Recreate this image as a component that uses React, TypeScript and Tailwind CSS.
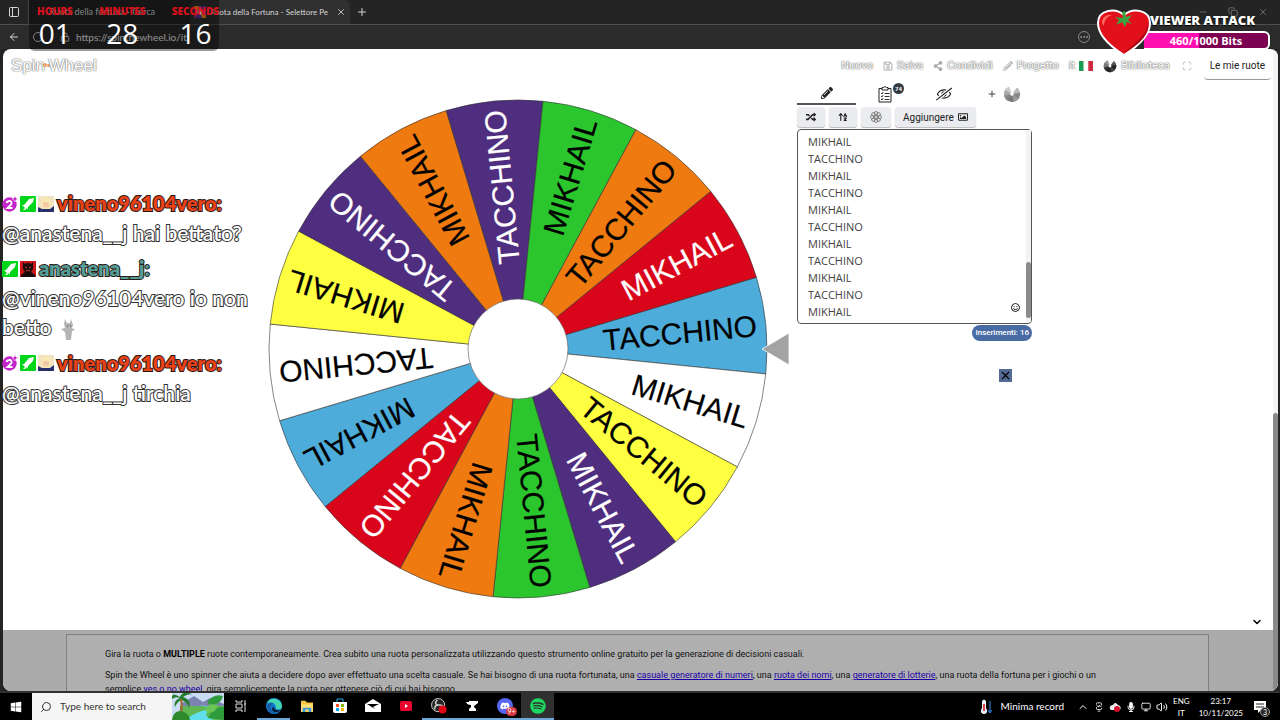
import type { ReactNode } from 'react';
import {
  ArrowLeft,
  BatteryCharging,
  ChevronDown,
  ChevronUp,
  Copy,
  Ellipsis,
  Lock,
  Maximize,
  Minus,
  Monitor,
  PanelTop,
  Plus,
  RotateCw,
  Search,
  Volume2,
  X,
} from 'lucide-react';
import {
  FaDiscord,
  FaMicrophone,
  FaPencilAlt,
  FaRandom,
  FaRegEyeSlash,
  FaRegImage,
  FaRegSave,
  FaRegSmile,
  FaShareAlt,
  FaSpotify,
  FaWindows,
} from 'react-icons/fa';
import { FaArrowUpAZ } from 'react-icons/fa6';

interface Slice {
  label: string;
  fill: string;
  text: string;
}

const PURPLE = '#4f2d7f';
const ORANGE = '#ee7a10';
const GREEN = '#2bc52d';
const BLUE = '#4eacdb';
const YELLOW = '#ffff42';
const RED = '#d9051a';

// Clockwise, starting from the slice under the pointer
const slices: Slice[] = [
  { label: 'TACCHINO', fill: BLUE, text: '#000' },
  { label: 'MIKHAIL', fill: '#fff', text: '#000' },
  { label: 'TACCHINO', fill: YELLOW, text: '#000' },
  { label: 'MIKHAIL', fill: PURPLE, text: '#fff' },
  { label: 'TACCHINO', fill: GREEN, text: '#000' },
  { label: 'MIKHAIL', fill: ORANGE, text: '#000' },
  { label: 'TACCHINO', fill: RED, text: '#fff' },
  { label: 'MIKHAIL', fill: BLUE, text: '#000' },
  { label: 'TACCHINO', fill: '#fff', text: '#000' },
  { label: 'MIKHAIL', fill: YELLOW, text: '#000' },
  { label: 'TACCHINO', fill: PURPLE, text: '#fff' },
  { label: 'MIKHAIL', fill: ORANGE, text: '#000' },
  { label: 'TACCHINO', fill: PURPLE, text: '#fff' },
  { label: 'MIKHAIL', fill: GREEN, text: '#000' },
  { label: 'TACCHINO', fill: ORANGE, text: '#000' },
  { label: 'MIKHAIL', fill: RED, text: '#fff' },
];

const entries = Array.from({ length: 12 }, (_, i) => (i % 2 === 0 ? 'MIKHAIL' : 'TACCHINO')).join('\n');

function Wheel() {
  const radius = 249;
  const step = 360 / slices.length;
  const offset = -5.5;

  const point = (deg: number) => {
    const rad = (deg * Math.PI) / 180;
    return `${(radius * Math.cos(rad)).toFixed(2)} ${(radius * Math.sin(rad)).toFixed(2)}`;
  };

  return (
    <svg viewBox="-250 -250 522 500" className="w-[522px] shrink-0" role="img" aria-label="Ruota">
      {slices.map((slice, i) => {
        const mid = offset + i * step;
        return (
          <g key={i}>
            <path
              d={`M0 0L${point(mid - step / 2)}A${radius} ${radius} 0 0 1 ${point(mid + step / 2)}Z`}
              fill={slice.fill}
              stroke="#333"
              strokeWidth="0.6"
            />
            <text
              transform={`rotate(${mid})`}
              x="240"
              y="10"
              textAnchor="end"
              fontSize="30"
              fontFamily="'Liberation Sans', sans-serif"
              fill={slice.text}
              stroke={slice.text}
              strokeWidth="0.2"
            >
              {slice.label}
            </text>
          </g>
        );
      })}
      <circle r="50" fill="#fff" stroke="#555" strokeWidth="0.6" />
      <path d="M244 0L271 -16V16Z" fill="#a3a3a3" stroke="#fff" strokeWidth="0.8" />
    </svg>
  );
}

function MiniWheel({ className, dark }: { className: string; dark?: boolean }) {
  const shades = dark
    ? ['#555', '#222', '#444', '#222', '#333', '#777', '#999']
    : ['#bbb', '#888', '#999', '#777', '#888', '#aaa', '#ccc'];
  return (
    <svg viewBox="-10 -10 20 20" className={className} aria-hidden="true">
      {shades.map((shade, i) => (
        <path key={i} d="M0 0L8.9 -1.2A9 9 0 0 1 5.6 7Z" fill={shade} transform={`rotate(${i * 44 - 45})`} />
      ))}
      <path d="M0 0L-4 -10H4Z" fill="#fff" />
      <circle r="2" fill="#fff" />
    </svg>
  );
}

function BrowserChrome() {
  return (
    <header className="bg-[#242424] font-[Lato,sans-serif] text-[#d5d5d5]">
      <div className="flex h-6 items-center pl-2">
        <PanelTop className="h-3 w-3 -rotate-90" />
        <div className="ml-2 flex h-full w-[162px] items-center border-l border-[#444] pl-5 text-[9px]">
          <span className="flex-1">Ruota della fortuna - Cerca</span>
        </div>
        <div className="flex h-full w-40 items-center gap-1 rounded-t-md bg-[#303030] pl-1 text-[8px]">
          <svg viewBox="0 0 12 12" className="h-3 w-3 shrink-0" aria-hidden="true">
            <rect width="12" height="12" fill="#5631a5" />
            <path d="M6 6L0 2V0H5ZM6 6L12 9V12H8Z" fill="#f08c1a" />
            <path d="M6 6L12 1V6ZM6 6L0 7V12Z" fill="#e32950" />
            <circle cx="6" cy="6" r="2.6" fill="#fff" />
          </svg>
          <span className="flex-1 whitespace-nowrap">Ruota della Fortuna - Selettore Pe</span>
          <button aria-label="Chiudi scheda" className="pr-1">
            <X className="h-2.5 w-2.5" />
          </button>
        </div>
        <button aria-label="Nuova scheda" className="ml-1.5">
          <Plus className="h-3 w-3" />
        </button>
        <div className="ml-auto flex gap-5 pr-3 text-[#777]">
          <Minus className="h-2.5 w-2.5" />
          <Copy className="h-2.5 w-2.5" />
          <X className="h-2.5 w-2.5" />
        </div>
      </div>
      <div className="flex h-[25px] items-center gap-3 border-t border-[#505050] bg-[#2b2b2b] px-2">
        <button aria-label="Indietro">
          <ArrowLeft className="h-3 w-3" />
        </button>
        <button aria-label="Aggiorna">
          <RotateCw className="h-3 w-3" />
        </button>
        <div className="flex flex-1 items-center gap-1.5 pl-1 text-[10px] text-[#eee]">
          <Lock className="h-2.5 w-2.5" />
          <span className="flex-1">https://spinthewheel.io/it</span>
          <span className="mr-[182px] rounded-full border border-[#888] text-[#aaa]">
            <Ellipsis className="h-2.5 w-2.5" />
          </span>
        </div>
      </div>
    </header>
  );
}

// White letters with a soft grey halo, used by the site header
const haloText =
  'text-white [text-shadow:0_0_1px_#777,0_0_1px_#888,0_0_2px_#999]';

function NavLink({ icon, children }: { icon?: ReactNode; children: ReactNode }) {
  return (
    <a href="#" className="flex items-center gap-1">
      {icon}
      <span className={haloText}>{children}</span>
    </a>
  );
}

function SiteHeader() {
  return (
    <div className="flex h-[34px] items-center justify-between pl-2 font-[Roboto,sans-serif]">
      <a href="#" className={`flex items-center font-['Liberation_Sans',sans-serif] text-[17px] ${haloText}`}>
        Spin
        <span className="-mx-0.5 text-[5px] font-bold text-amber-600 [text-shadow:none]">the</span>
        Wheel
      </a>
      <nav className="flex items-center gap-[10px] text-[11px]">
        <NavLink>Nuovo</NavLink>
        <NavLink icon={<FaRegSave className="h-2.5 w-2.5 text-[#aaa]" />}>Salva</NavLink>
        <NavLink icon={<FaShareAlt className="h-2.5 w-2.5 text-[#aaa]" />}>Condividi</NavLink>
        <NavLink icon={<FaPencilAlt className="h-2.5 w-2.5 text-[#bbb]" />}>Progetto</NavLink>
        <a href="#" className="flex items-center gap-1">
          <span className={haloText}>it</span>
          <svg viewBox="0 0 14 10" className="w-3.5" aria-label="Italiano">
            <path d="M0 0h4.7v10H0z" fill="#1a9b50" />
            <path d="M4.7 0h4.6v10H4.7z" fill="#fff" />
            <path d="M9.3 0H14v10H9.3z" fill="#cd2a3e" />
          </svg>
        </a>
        <NavLink icon={<MiniWheel className="h-3.5 w-3.5" dark />}>Biblioteca</NavLink>
        <button aria-label="Schermo intero" className="px-0.5">
          <Maximize className="h-2.5 w-2.5 text-[#bbb]" />
        </button>
        <button className="mr-0.5 rounded-sm border-b border-[#999] px-1.5 py-1.5 text-[10px] text-[#222]">
          Le mie ruote
        </button>
      </nav>
    </div>
  );
}

const toolButton =
  'flex h-5 items-center justify-center rounded-[3px] bg-[#ebecef] text-[#222] shadow-[0_1px_1px_#bbb]';

function EntriesPanel() {
  return (
    <section className="w-[235px] font-[Roboto,sans-serif]">
      <div className="flex h-[22px] items-stretch text-[#222]">
        <button aria-label="Modifica" className="flex w-[59px] items-center justify-center border-b-2 border-[#555]">
          <FaPencilAlt className="h-3 w-3" />
        </button>
        <button aria-label="Risultati" className="relative flex w-[58px] items-center justify-center">
          <ClipboardIcon />
          <span className="absolute top-0 right-2.5 rounded-full bg-[#333a42] px-[2px] text-[6px] leading-[11px] font-bold text-white">
            74
          </span>
        </button>
        <button aria-label="Nascondi" className="flex w-[59px] items-center justify-center">
          <FaRegEyeSlash className="h-4 w-4 -scale-x-100" />
        </button>
        <button aria-label="Nuova ruota" className="ml-3.5 flex items-center gap-1.5">
          <Plus className="h-2.5 w-2.5" />
          <MiniWheel className="h-[18px] w-[18px]" />
        </button>
      </div>
      <div className="mt-[2px] mb-[2px] flex gap-1">
        <button aria-label="Mescola" className={`w-7 ${toolButton}`}>
          <FaRandom className="h-2.5 w-2.5" />
        </button>
        <button aria-label="Ordina" className={`w-7 ${toolButton}`}>
          <FaArrowUpAZ className="h-2.5 w-2.5" />
        </button>
        <button aria-label="Aspetto" className={`w-[30px] ${toolButton}`}>
          <svg viewBox="-8 -8 16 16" className="h-3 w-3" fill="none" stroke="#666" aria-hidden="true">
            {[0, 45, 90, 135, 180, 225, 270, 315].map((a) => (
              <circle key={a} cx="5" r="2.3" transform={`rotate(${a})`} />
            ))}
            <circle r="2" />
          </svg>
        </button>
        <button className={`gap-1 px-2 text-[10px] ${toolButton}`}>
          Aggiungere <FaRegImage className="h-2.5 w-2.5" />
        </button>
      </div>
      <div className="relative">
        <textarea
          aria-label="Inserimenti"
          defaultValue={entries}
          className="block h-[195px] w-full resize-none overflow-hidden rounded-sm border border-[#555] px-[10px] pt-[3px] font-['Open_Sans',sans-serif] text-[11px] leading-[17px] text-[#444]"
        />
        <div className="absolute top-px right-px h-[192px] w-[5px] bg-[#f3f3f3]">
          <div className="mt-[132px] h-[56px] rounded-full bg-[#8b8b8b]" />
        </div>
        <button aria-label="Emoji" className="absolute right-3 bottom-3">
          <FaRegSmile className="h-[9px] w-[9px]" />
        </button>
      </div>
      <div className="flex justify-end pt-px">
        <span className="rounded-full bg-[#4a6ca4] px-[3px] text-[8px] leading-4 font-medium text-white">
          Inserimenti: 16
        </span>
      </div>
      <div className="flex justify-end pt-7 pr-5">
        <button aria-label="Chiudi" className="bg-[#536a94] text-black">
          <X className="h-[13px] w-[13px]" />
        </button>
      </div>
    </section>
  );
}

function ClipboardIcon() {
  return (
    <svg viewBox="0 0 14 17" className="h-[17px] w-3.5" fill="none" stroke="#222" aria-hidden="true">
      <path d="M4 2.5H1V16H13V2.5H10" />
      <path d="M4 1.5H5.5Q7 -0.5 8.5 1.5H10V4H4Z" />
      <path d="M3 7l1 1 1-2M3 10l1 1 1-2M3 13l1 1 1-2M6.5 7.5h5M6.5 10.5h5M6.5 13.5h5" strokeWidth="0.9" />
    </svg>
  );
}

function Description() {
  const link = 'text-[#1b00a8] underline';
  return (
    <article className="flex-1 overflow-hidden bg-[#ababab] pt-1 pr-16 pl-[63px]">
      <div className="h-full border border-b-0 border-[#808080] bg-[#afafaf] pt-3 pr-20 pl-[38px] font-[Roboto,sans-serif] text-[9px] leading-[14px] text-[#111]">
        <p>
          Gira la ruota o <strong className="text-black">MULTIPLE</strong> ruote contemporaneamente. Crea subito una
          ruota personalizzata utilizzando questo strumento online gratuito per la generazione di decisioni casuali.
        </p>
        <p className="mt-[7px]">
          Spin the Wheel è uno spinner che aiuta a decidere dopo aver effettuato una scelta casuale. Se hai bisogno di
          una ruota fortunata, una <a href="#" className={link}>casuale generatore di numeri</a>, una{' '}
          <a href="#" className={link}>ruota dei nomi</a>, una <a href="#" className={link}>generatore di lotterie</a>,
          una ruota della fortuna per i giochi o un semplice <a href="#" className={link}>yes o no wheel</a>, gira
          semplicemente la ruota per ottenere ciò di cui hai bisogno.
        </p>
      </div>
    </article>
  );
}

function Timer() {
  const units = [
    { label: 'HOURS', value: '01' },
    { label: 'MINUTES', value: '28' },
    { label: 'SECONDS', value: '16' },
  ];
  return (
    <div className="absolute top-0 left-[29px] flex h-[51px] w-[190px] justify-between rounded-b-md bg-black/40 pl-2 font-['Open_Sans',sans-serif]">
      {units.map((unit) => (
        <div key={unit.label} className="flex flex-col items-center pt-1">
          <span className="text-[10px] leading-[14px] font-extrabold text-[#d5121b]">{unit.label}</span>
          <span className="text-[28px] leading-[30px] font-medium text-white">{unit.value}</span>
        </div>
      ))}
    </div>
  );
}

function ViewerAttack() {
  return (
    <div className="absolute top-[9px] right-[10px] flex font-['Open_Sans',sans-serif]">
      <svg viewBox="0 0 56 48" className="relative z-10 w-14" aria-hidden="true">
        <path
          d="M28 46C20 41 2 29 2 14C2 1 19 -2 28 6C37 -2 54 1 54 14C54 29 36 41 28 46Z"
          fill="#e2101b"
          stroke="#fff"
          strokeWidth="2"
        />
        <path d="M6 14C6 8 11 5 16 6C11 8 8 11 8 17Z" fill="#ff6a5f" />
        <path d="M52 14C50 28 37 35 28 44C46 34 54 24 52 14Z" fill="#b00614" />
        <path d="M27 9L26 3L29 2L30 8L36 6L32 11L36 15L31 13L29 18L26 13L20 16L23 11L19 8Z" fill="#3aa33f" />
      </svg>
      <div className="-ml-2">
        <div className="pl-1.5 text-[13px] leading-[22px] font-extrabold text-white [text-shadow:0_1px_1px_#000]">
          VIEWER ATTACK
        </div>
        <div className="h-[19px] w-[126px] rounded-r-md border-2 border-l-0 border-white bg-[linear-gradient(90deg,#ff0fb0_44%,#7c0150_45%)] text-center text-[11px] leading-4 font-bold text-white">
          460/1000 Bits
        </div>
      </div>
    </div>
  );
}

function SwordBadge() {
  return (
    <svg viewBox="0 0 16 16" className="h-4 w-4" aria-hidden="true">
      <rect width="16" height="16" rx="1" fill="#00d619" />
      <path d="M14 2L9 3L4 9L2 9L5 12L3 14L5 14L7 12L8 14L8 11L13 6Z" fill="#fff" />
    </svg>
  );
}

function CheerBadge() {
  return (
    <svg viewBox="0 0 16 16" className="h-4 w-4" aria-hidden="true">
      <circle cx="7.5" cy="8.5" r="7.2" fill="#c425cb" />
      <path d="M13 0L14 2L16 3L14 4L13 6L12 4L10 3L12 2Z" fill="#c425cb" stroke="#fff" strokeWidth="0.5" />
      <path d="M4.5 7Q5 5 7.5 5T9.5 8L5.5 12H10.5" fill="none" stroke="#fff" strokeWidth="1.8" />
    </svg>
  );
}

function PortraitBadge() {
  return (
    <svg viewBox="0 0 16 16" className="h-4 w-4" aria-hidden="true">
      <rect width="16" height="16" fill="#f2e3c0" />
      <path d="M0 11L4 13L12 13L16 10V16H0Z" fill="#27306b" />
      <path d="M3 5Q8 -2 13 5L12 11Q8 15 4 11Z" fill="#fae8b4" />
      <path d="M5 7Q8 5 11 7V10Q8 13 5 10Z" fill="#f3c8a5" />
    </svg>
  );
}

function DemonBadge() {
  return (
    <svg viewBox="0 0 16 16" className="h-4 w-4" aria-hidden="true">
      <rect width="16" height="16" fill="#c8171a" />
      <path d="M3 1L5 3Q8 1 11 3L13 1V8L11 11L15 14V16H1V14L5 11L3 8Z" fill="#1b0a0c" />
      <path d="M5 6L7 7M11 6L9 7M6 10Q8 8 10 10" stroke="#c63a2a" fill="none" />
    </svg>
  );
}

const outlined = '[paint-order:stroke_fill]';

function ChatMessage({ badges, user, color, children }: { badges: ReactNode; user: string; color: string; children: ReactNode }) {
  return (
    <div className="mb-[7px] leading-[29px]">
      <div className="flex items-center gap-[2px] text-[20px]">
        {badges}
        <span className={`pl-px font-extrabold [-webkit-text-stroke:2px_#2b1a16] ${outlined} ${color}`}>{user}:</span>
      </div>
      <p className={`text-[21px] font-semibold text-white [-webkit-text-stroke:2px_#333] ${outlined}`}>{children}</p>
    </div>
  );
}

function Chat() {
  const vinenoBadges = (
    <>
      <CheerBadge />
      <SwordBadge />
      <PortraitBadge />
    </>
  );
  return (
    <div className="absolute top-[189px] left-[2px] w-64 font-[Lato,sans-serif]">
      <ChatMessage badges={vinenoBadges} user="vineno96104vero" color="text-[#e94218]">
        @anastena__j hai bettato?
      </ChatMessage>
      <ChatMessage
        badges={
          <>
            <SwordBadge />
            <DemonBadge />
          </>
        }
        user="anastena__j"
        color="text-[#539f97]"
      >
        @vineno96104vero io non
        <br />
        betto{' '}
        <svg viewBox="0 0 14 24" className="ml-1 inline h-6 w-3.5" aria-hidden="true">
          <path d="M4 1L6 5H9L10 1L12 7L11 10L14 12L11 13L10 22H5L4 14L0 11L4 10L3 6Z" fill="#b5b5b5" />
          <path d="M6 8H7M9 8H10" stroke="#333" />
        </svg>
      </ChatMessage>
      <ChatMessage badges={vinenoBadges} user="vineno96104vero" color="text-[#e94218]">
        @anastena__j tirchia
      </ChatMessage>
    </div>
  );
}

function TaskButton({ label, open, active, children }: { label: string; open?: boolean; active?: boolean; children: ReactNode }) {
  return (
    <button
      aria-label={label}
      className={`flex h-full w-[33px] items-center justify-center border-b-2 ${open ? 'border-[#6fa8d8]' : 'border-transparent'} ${active ? 'bg-[#303030]' : ''}`}
    >
      {children}
    </button>
  );
}

function Taskbar() {
  return (
    <footer className="flex h-[27px] items-center bg-black font-[Lato,sans-serif] text-[10px] text-white">
      <button aria-label="Start" className="flex w-8 justify-center">
        <FaWindows className="h-3 w-3" />
      </button>
      <div className="flex h-full w-[192px] items-center bg-[#f5f5f5] text-[#333]">
        <Search className="mx-2 h-3 w-3 -scale-x-100" />
        <input
          aria-label="Search"
          placeholder="Type here to search"
          className="w-[108px] bg-transparent placeholder:text-[#333]"
        />
        <svg viewBox="0 0 52 27" className="ml-auto h-full w-[52px]" aria-hidden="true">
          <path d="M0 0H52V27H0Z" fill="#c9dcf4" />
          <path d="M10 10L22 3L31 9L38 5L52 11V18H10Z" fill="#7c83b0" />
          <path d="M8 13H52V27H8Z" fill="#5fb655" />
          <path d="M27 12Q42 15 30 18Q18 22 14 27H42Q30 23 36 19Q45 14 27 12Z" fill="#5fe0ec" />
          <path d="M8 4Q-1 -2 0 6Q4 3 8 5Q1 8 3 14Q5 9 9 7Q16 9 17 15Q20 7 11 4Q18 -1 21 3Q15 -4 9 2Z" fill="#257d2b" />
          <path d="M8 6Q10 14 5 27H9Q12 14 10 6Z" fill="#9c6b35" />
          <path d="M35 9Q42 0 51 3Q49 12 38 12ZM36 25Q40 13 52 14V27Z" fill="#2e9b3c" />
          <path d="M33 17Q36 9 46 12Q44 20 36 20Z" fill="#69c655" />
          <path d="M0 27Q1 18 9 18Q17 20 18 27Z" fill="#2f8a2c" />
        </svg>
      </div>
      <TaskButton label="Task view">
        <svg viewBox="0 0 12 12" className="h-3 w-3" fill="none" stroke="#ddd" aria-hidden="true">
          <path d="M1 0V2H7V0M1 12V10H7V12M1 4H7V8H1ZM10 0V12M9 4H11" />
        </svg>
      </TaskButton>
      <TaskButton label="Edge" open>
        <svg viewBox="0 0 16 16" className="h-4 w-4" aria-hidden="true">
          <circle cx="8" cy="8" r="8" fill="#1680d8" />
          <path d="M1 5A8 8 0 0 1 16 8Q16 12 11 11Q9 10 10 8Q8 3 1 5Z" fill="#43d6ad" />
          <path d="M5 9Q5 15 12 15Q7 17 3 13Q-1 8 3 5Q6 4 8 6Q5 6 5 9Z" fill="#145ba8" />
          <path d="M8 8Q7 13 15 12Q12 15 8 14Q4 11 8 8Z" fill="#071d35" />
        </svg>
      </TaskButton>
      <TaskButton label="Esplora file">
        <svg viewBox="0 0 16 14" className="h-3 w-3.5" aria-hidden="true">
          <path d="M1 1H6L8 3H15V14H1Z" fill="#f4c744" />
          <path d="M1 5H15V13H1Z" fill="#ffdf75" />
          <path d="M3 9H13V14H10V11H6V14H3Z" fill="#3899da" />
        </svg>
      </TaskButton>
      <TaskButton label="Store">
        <svg viewBox="0 0 14 16" className="h-4 w-3.5" aria-hidden="true">
          <path d="M4 4V1H10V4" fill="none" stroke="#31a8e0" />
          <path d="M0 4H14V13Q14 15 12 15H2Q0 15 0 13Z" fill="#fff" />
          <path d="M3 6H6V9H3Z" fill="#f25022" />
          <path d="M8 6H11V9H8Z" fill="#7fba00" />
          <path d="M3 10H6V13H3Z" fill="#00a4ef" />
          <path d="M8 10H11V13H8Z" fill="#ffb900" />
        </svg>
      </TaskButton>
      <TaskButton label="Posta">
        <svg viewBox="0 0 16 14" className="h-3.5 w-4" aria-hidden="true">
          <path d="M0 5L8 0L16 5V13H0Z" fill="#fff" />
          <path d="M2 5H14L8 8L10 10Z" fill="#000" />
        </svg>
      </TaskButton>
      <TaskButton label="YouTube">
        <svg viewBox="0 0 12 10" className="h-2.5 w-3" aria-hidden="true">
          <rect width="12" height="10" rx="2" fill="#e9052d" />
          <path d="M5 3L8 5L5 7Z" fill="#fff" />
        </svg>
      </TaskButton>
      <TaskButton label="OBS" open>
        <svg viewBox="0 0 18 18" className="h-4 w-4" aria-hidden="true">
          <circle cx="8" cy="8" r="7.4" fill="#242424" stroke="#ddd" />
          <path d="M7 2Q3 7 8 8Q13 7 14 10M8 8Q4 8 4 13" fill="none" stroke="#ccc" strokeWidth="1.7" />
          <circle cx="13" cy="13" r="4.5" fill="#e10613" />
        </svg>
      </TaskButton>
      <TaskButton label="Streamer" open>
        <svg viewBox="0 0 12 12" className="h-3 w-3" fill="#fff" aria-hidden="true">
          <path d="M0 2H3V1H12V3L8 6V7L10 9V11H3V9L5 7V5Q1 5 0 2Z" />
        </svg>
      </TaskButton>
      <TaskButton label="Discord" open>
        <span className="relative flex h-4 w-4 items-center justify-center rounded-full bg-[#5865f2]">
          <FaDiscord className="h-2.5 w-2.5" />
          <span className="absolute -right-1 -bottom-0.5 rounded-full bg-[#d83842] px-px text-[7px] leading-[9px]">9+</span>
        </span>
      </TaskButton>
      <TaskButton label="Spotify" open active>
        <FaSpotify className="h-4 w-4 text-[#1ed760]" />
      </TaskButton>
      <div className="ml-auto flex items-center gap-[5px] pr-[14px]">
        <svg viewBox="0 0 12 16" className="h-4 w-3" aria-hidden="true">
          <path d="M2 2Q4 -1 6 2V9Q9 14 4 15Q-1 14 2 9Z" fill="#e6f3ff" />
          <path d="M4 5V12" stroke="#e43d46" strokeWidth="2" />
          <path d="M10 2V13M8 11L10 14L12 11" fill="none" stroke="#3588ef" />
        </svg>
        <span className="mr-2 ml-1">Minima record</span>
        <ChevronUp className="h-3 w-3" />
        <BatteryCharging className="h-2.5 w-2.5 rotate-90" />
        <svg viewBox="0 0 12 10" className="h-2.5 w-3" aria-hidden="true">
          <path d="M1 7Q0 3 4 3Q6 -1 9 3Q13 4 11 8H2Z" fill="#eee" />
          <circle cx="8" cy="7" r="3" fill="#d51130" />
        </svg>
        <FaMicrophone className="h-2.5 w-2.5" />
        <Monitor className="h-2.5 w-2.5" />
        <Volume2 className="h-3 w-3" />
        <div className="pr-1 text-center text-[8px] leading-[12px]">
          ENG
          <br />
          IT
        </div>
        <div className="text-center text-[8px] leading-[12px]">
          23:17
          <br />
          10/11/2025
        </div>
        <div className="relative ml-1.5">
          <svg viewBox="0 0 12 12" className="h-3 w-3" aria-hidden="true">
            <path d="M0 0H12V9H7L4 12V9H0Z" fill="#fff" />
            <path d="M2 3H10M2 6H10" stroke="#222" />
          </svg>
          <span className="absolute -right-1 -bottom-1 rounded-full border border-[#999] bg-[#222] px-[2px] text-[7px] leading-[8px]">
            3
          </span>
        </div>
      </div>
    </footer>
  );
}

export default function App() {
  return (
    <div className="relative flex h-screen flex-col overflow-hidden bg-[#242424]">
      <BrowserChrome />
      <main className="mr-[2px] ml-[3px] flex min-h-0 flex-1 overflow-hidden rounded-lg bg-white">
        <div className="flex min-w-0 flex-1 flex-col">
          <SiteHeader />
          <div className="flex flex-1 items-start pl-[265px]">
            <div className="pt-4">
              <Wheel />
            </div>
            <div className="ml-[7px]">
              <EntriesPanel />
            </div>
          </div>
          <div className="flex justify-end pr-[10px] pb-[2px]">
            <button aria-label="Mostra altro">
              <ChevronDown className="h-3 w-3" strokeWidth={3} />
            </button>
          </div>
          <div className="flex h-[61px]">
            <Description />
          </div>
        </div>
        <div className="flex w-[5px] flex-col bg-[#f4f4f4] pt-[364px]">
          <div className="flex-1 rounded-full bg-[#8a8a8a]" />
        </div>
      </main>
      <div className="h-[2px] shrink-0 bg-[#303030]" />
      <Taskbar />
      <Timer />
      <ViewerAttack />
      <Chat />
    </div>
  );
}
